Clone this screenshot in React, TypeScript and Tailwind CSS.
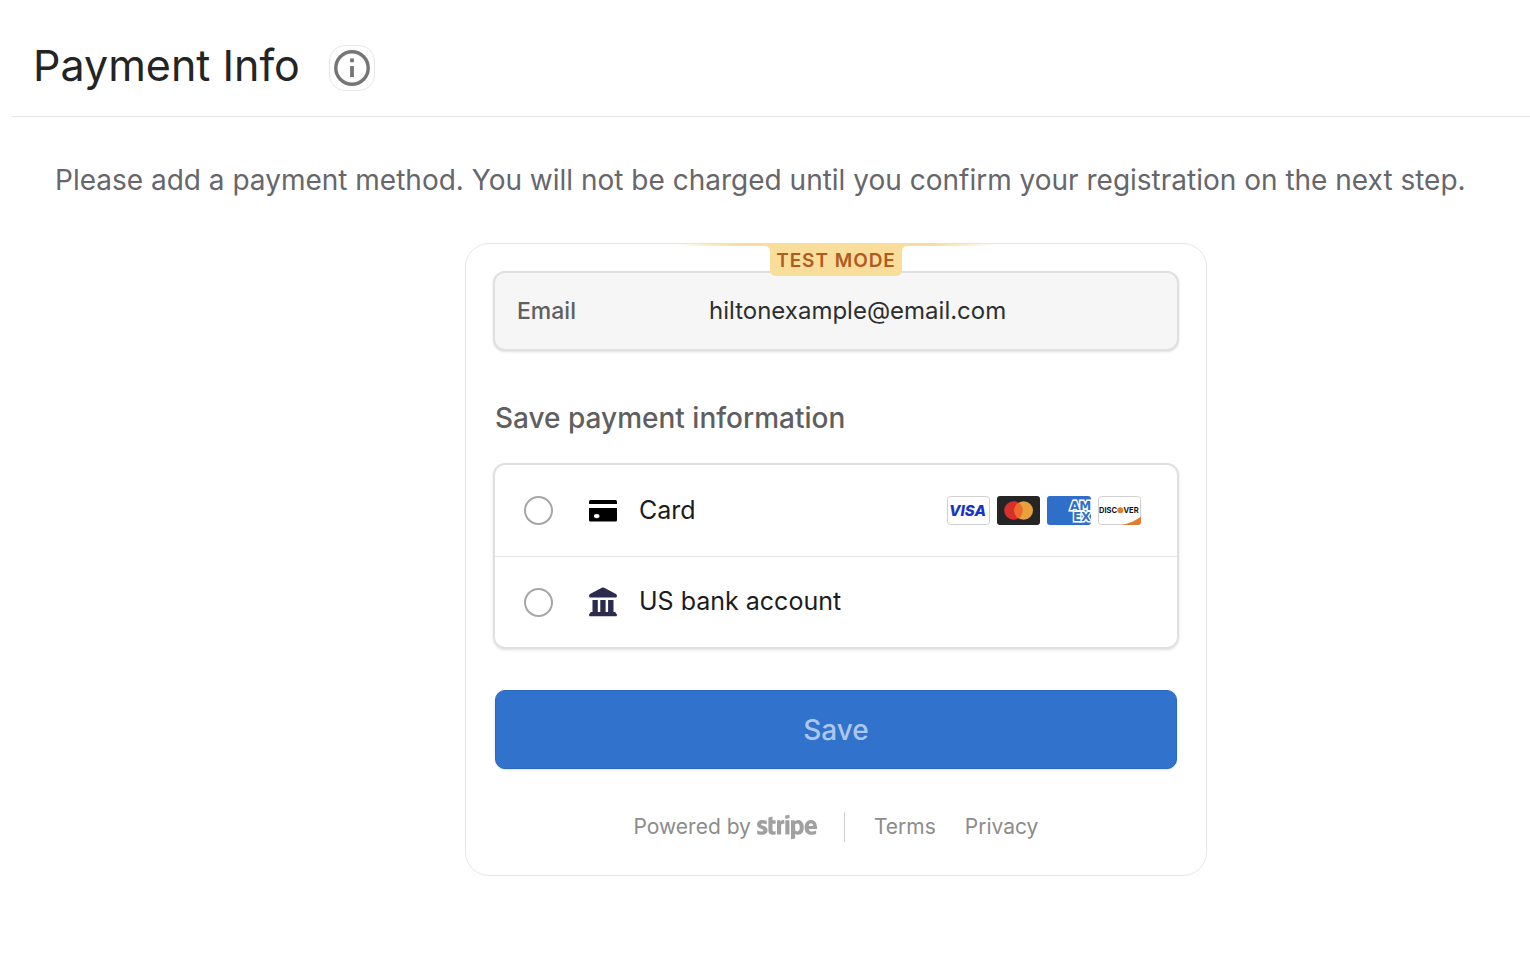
import React from 'react'
import { FaStripe } from 'react-icons/fa'

const CardIcon = () => (
  <svg viewBox="0 0 28 28" className="size-7 fill-black" aria-hidden="true">
    <path d="M1.500 3h25A1.500 1.500 0 0 1 28 4.500V7H0V4.500A1.500 1.500 0 0 1 1.500 3z" />
    <path
      fillRule="evenodd"
      d="M0 11h28v12a1.500 1.500 0 0 1-1.500 1.500h-25A1.500 1.500 0 0 1 0 23zM7.700 17a2.800 2.100 0 1 0 0 4.200 2.800 2.100 0 0 0 0-4.200z"
    />
  </svg>
)

const BankIcon = () => (
  <svg viewBox="0 0 28 30" className="h-[30px] w-7 fill-[#2a2b4e]" aria-hidden="true">
    <path d="M12.800.8a2.500 2.500 0 0 1 2.400 0L27 7c1.300.8 1.300 3.500-.4 3.500H1.400C-.3 10.500-.3 7.800 1 7z" />
    <path d="M3.500 13h5.300v12h2.500V13h5.300v12h2.500V13h5.400v12H26a1.800 1.800 0 0 1 1 1.500c1.300.3 1.300 2.700 0 2.700H1c-1.300 0-1.300-2.400 0-2.700A1.800 1.800 0 0 1 2 25h1.500z" />
  </svg>
)

const VisaLogo = () => (
  <svg viewBox="0 0 43 29" className="h-[29px] w-[43px]" role="img" aria-label="Visa">
    <rect x=".5" y=".5" width="42" height="28" rx="3" fill="#fff" stroke="#d0d0d0" />
    <text x="2" y="20" fontFamily="Inter, sans-serif" fontSize="15" fontWeight="800" fontStyle="italic" fill="#1a34c8">
      VISA
    </text>
  </svg>
)

const MastercardLogo = () => (
  <svg viewBox="0 0 43 29" className="h-[29px] w-[43px]" role="img" aria-label="Mastercard">
    <rect width="43" height="29" rx="3" fill="#252525" />
    <circle cx="16.500" cy="14.500" r="9.300" fill="#d9302c" />
    <circle cx="26.700" cy="14.500" r="9.300" fill="#e9a13b" />
    <path d="M21.600 6.700a9.300 9.300 0 0 1 0 15.600 9.300 9.300 0 0 1 0-15.600z" fill="#ec6b2d" />
  </svg>
)

const AmexLogo = () => (
  <svg viewBox="0 0 44 29" className="h-[29px] w-11" role="img" aria-label="American Express">
    <clipPath id="amex">
      <rect width="44" height="29" rx="3" />
    </clipPath>
    <g clipPath="url(#amex)">
      <rect width="44" height="29" fill="#306fc9" />
      <g fontFamily="DejaVu Sans, sans-serif" fontSize="12" fontWeight="700" fill="#306fc9" stroke="#fff" strokeWidth="2.800" paintOrder="stroke">
        <text x="23" y="13.500">AM</text>
        <text x="26" y="24.500">EX</text>
      </g>
    </g>
  </svg>
)

const DiscoverLogo = () => (
  <svg viewBox="0 0 43 29" className="h-[29px] w-[43px]" role="img" aria-label="Discover">
    <rect x=".5" y=".5" width="42" height="28" rx="3" fill="#fff" stroke="#d0d0d0" />
    <path d="M43 20.500c-5 4-11.500 7-19 8.500h16a3 3 0 0 0 3-3z" fill="#e27d2f" />
    <g fontFamily="Inter, sans-serif" fontSize="7.500" fontWeight="700" fill="#111">
      <text x="1" y="17">DISC</text>
      <text x="25.500" y="17">VER</text>
    </g>
    <circle cx="22.300" cy="14.200" r="3" fill="#e27d2f" />
  </svg>
)

interface PaymentOptionProps {
  value: string
  label: string
  icon: React.ReactNode
  children?: React.ReactNode
}

const PaymentOption: React.FC<PaymentOptionProps> = ({ value, label, icon, children }) => {
  return (
    <label className="flex h-[91px] items-center border-t border-[#e6e6e6] pr-9 pl-[29px] text-[25px] text-[#1c1c1c] first:border-t-0">
      <input
        type="radio"
        name="method"
        value={value}
        className="size-[29px] shrink-0 appearance-none rounded-full border-2 border-[#a6a6a6] bg-white checked:border-8 checked:border-[#306fc9]"
      />
      <span className="ml-9 shrink-0">{icon}</span>
      <span className="ml-[22px] flex-1">{label}</span>
      {children}
    </label>
  )
}

const TestModeBadge = () => (
  <div className="absolute inset-x-0 -top-px flex justify-center">
    <div className="absolute top-0 h-[3px] w-[322px] bg-[linear-gradient(90deg,transparent,#f9de9b_20%,#f9de9b_80%,transparent)]" />
    <svg viewBox="0 0 144 9" className="absolute top-0 h-[9px] w-36 fill-[#f9de9b]" aria-hidden="true">
      <path d="M0 0h144v3h-1a5 5 0 0 0-5 5v1H6V8a5 5 0 0 0-5-5H0z" />
    </svg>
    <span className="relative h-[33px] w-[132px] rounded-b-md bg-[#f9de9b] text-center text-[19px] leading-9 font-semibold tracking-wider text-[#b05b21]">
      TEST MODE
    </span>
  </div>
)

export default function App() {
  return (
    <div className="min-h-screen bg-white font-['Inter',sans-serif] text-[#242424]">
      <header className="ml-3 flex h-[117px] items-center gap-[29px] border-b border-[#e5e5e5] pt-5 pl-[21px]">
        <h1 className="pb-[6px] text-[43px] leading-[52px]">Payment Info</h1>
        <button
          type="button"
          aria-label="More information"
          className="flex size-[46px] items-center justify-center rounded-2xl border border-[#e8e8e8]"
        >
          <svg viewBox="0 0 36 36" className="size-9" aria-hidden="true">
            <circle cx="18" cy="18" r="16.200" fill="none" stroke="#757575" strokeWidth="3.400" />
            <path d="M16.100 8.500h3.800v3.800h-3.800zM16.100 16h3.800v11h-3.800z" fill="#757575" />
          </svg>
        </button>
      </header>

      <main>
        <p className="mt-[43px] ml-[55px] text-[28px] leading-10 text-[#66666b]">
          Please add a payment method. You will not be charged until you confirm your registration on the next step.
        </p>

        <div className="mt-[43px] flex justify-center pl-[142px]">
          <form
            onSubmit={(e) => e.preventDefault()}
            className="relative w-full max-w-[742px] rounded-3xl border border-[#e6e6e6] px-[27px] pt-[27px] pb-[33px]"
          >
            <TestModeBadge />

            <div className="flex h-20 items-center rounded-xl border-2 border-[#e0e0e0] bg-[#f6f6f6] px-[22px] shadow-sm">
              <label htmlFor="email" className="w-48 shrink-0 text-[23px] font-medium text-[#5f5f5f]">
                Email
              </label>
              <input
                id="email"
                type="email"
                readOnly
                defaultValue="hiltonexample@email.com"
                className="min-w-0 flex-1 text-2xl text-[#2e2e2e] outline-none"
              />
            </div>

            <fieldset className="mt-12">
              <legend className="pl-[2px] text-[28px] leading-[38px] font-medium text-[#5f5f5f]">
                Save payment information
              </legend>
              <div className="mt-[26px] rounded-xl border-2 border-[#e0e0e0] shadow-sm">
                <PaymentOption value="card" label="Card" icon={<CardIcon />}>
                  <span className="flex gap-[7px]">
                    <VisaLogo />
                    <MastercardLogo />
                    <AmexLogo />
                    <DiscoverLogo />
                  </span>
                </PaymentOption>
                <PaymentOption value="bank" label="US bank account" icon={<BankIcon />} />
              </div>
            </fieldset>

            <div className="mt-[41px] px-[2px]">
              <button
                type="submit"
                className="h-[79px] w-full rounded-[10px] border border-[#2c68bd] bg-[#3072cc] text-[28px] font-medium text-[#acc7eb] shadow-sm"
              >
                Save
              </button>
            </div>

            <footer className="mt-[43px] flex h-[30px] items-center justify-center text-[21px] text-[#8c8c8c]">
              <span className="flex items-center gap-[6px]">
                Powered by
                <FaStripe className="h-12 w-[60px] text-[#a0a0a0]" aria-label="Stripe" />
              </span>
              <span className="mr-[29px] ml-[27px] h-[30px] w-px bg-[#cfcfcf]" />
              <a href="#terms">Terms</a>
              <a href="#privacy" className="ml-[29px]">Privacy</a>
            </footer>
          </form>
        </div>
      </main>
    </div>
  )
}
